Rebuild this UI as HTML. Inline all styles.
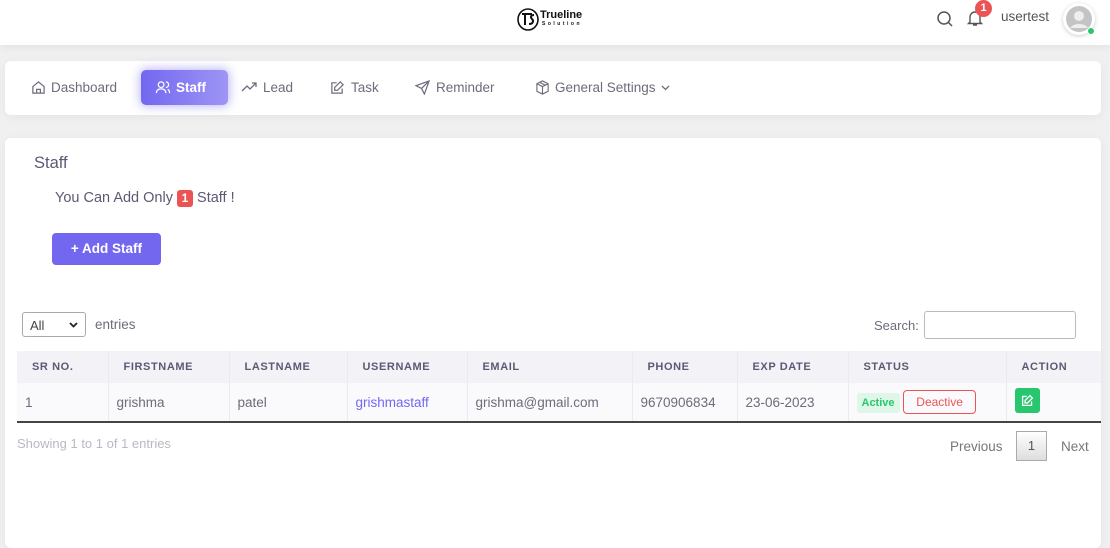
<!DOCTYPE html>
<html><head><style>
*{box-sizing:border-box;margin:0;padding:0}
body{width:1110px;height:534px;overflow:hidden;background:#f0f0f0;font-family:"Liberation Sans",sans-serif;color:#5e5873;position:relative}
.a{position:absolute}
.hdr{left:0;top:0;width:1110px;height:45px;background:#fff;box-shadow:0 2px 8px rgba(0,0,0,.06)}
.card{background:#fff;border-radius:6px;box-shadow:0 2px 10px rgba(0,0,0,.05)}
.nav span{position:absolute;top:80px;font-size:13.5px;color:#6e6b7b}
.nav svg{position:absolute;top:80px}
th,td{text-align:left;padding-left:8px;border-right:1px solid #ebe9f1}
th{font-size:11px;font-weight:bold;letter-spacing:.6px;color:#5e5873;background:#f3f2f7;height:32px;padding-left:15px}
td{font-size:13.5px;color:#6e6b7b;background:#fafafc;height:39px;border-bottom:2px solid #444}
td:last-child,th:last-child{border-right:none}
</style></head><body>
<div class="a hdr"></div>
<svg class="a" style="left:517px;top:8px" width="22" height="23" viewBox="0 0 22 23"><ellipse cx="11" cy="11.5" rx="10" ry="10.5" fill="none" stroke="#111" stroke-width="1.6"/><path d="M5 6h10M8 6v11M17 7c-3 0-4 2-2 4s1 5-3 5" fill="none" stroke="#111" stroke-width="2"/></svg>
<div class="a" style="left:540px;top:9px;font-size:11px;font-weight:bold;color:#111">Trueline</div>
<div class="a" style="left:542px;top:21px;font-size:5px;font-weight:bold;letter-spacing:2.5px;color:#111">Solution</div>
<svg class="a" style="left:936px;top:10px" width="18" height="18" viewBox="0 0 18 18"><circle cx="8" cy="8" r="6" fill="none" stroke="#555" stroke-width="1.5"/><path d="M12.5 12.5L16 16" stroke="#555" stroke-width="1.5"/></svg>
<svg class="a" style="left:965px;top:8px" width="20" height="20" viewBox="0 0 20 20"><path d="M5 14V9a5 5 0 0110 0v5l1.5 1.5h-13z M8 17h4" fill="none" stroke="#555" stroke-width="1.4"/></svg>
<div class="a" style="left:975px;top:0;width:17px;height:17px;border-radius:50%;background:#ea5455;color:#fff;font-size:11px;font-weight:bold;text-align:center;line-height:17px">1</div>
<div class="a" style="left:1001px;top:9px;font-size:13.5px;color:#555">usertest</div>
<div class="a" style="left:1063px;top:3px;width:32px;height:32px;border-radius:50%;background:#fff;box-shadow:0 1px 4px rgba(0,0,0,.2)"></div>
<svg class="a" style="left:1066px;top:6px" width="26" height="26" viewBox="0 0 26 26"><circle cx="13" cy="13" r="13" fill="#c4c4c4"/><circle cx="13" cy="10" r="5" fill="#eee"/><path d="M4 22a10 7 0 0118 0" fill="#eee"/></svg>
<div class="a" style="left:1087px;top:27px;width:8px;height:8px;border-radius:50%;background:#28c76f;border:1px solid #fff"></div>

<div class="a card" style="left:5px;top:61px;width:1096px;height:54px"></div>
<div class="nav">
<svg style="left:31px" width="15" height="15" viewBox="0 0 16 16"><path d="M2 7l6-5 6 5v7H2z M6 14v-4h4v4" fill="none" stroke="#6e6b7b" stroke-width="1.3"/></svg><span style="left:51px">Dashboard</span>
<div class="a" style="left:141px;top:70px;width:87px;height:35px;border-radius:5px;background:linear-gradient(90deg,#7367f0,#9e95f5);box-shadow:0 0 10px 1px rgba(115,103,240,.5)"></div>
<svg style="left:155px" width="16" height="15" viewBox="0 0 16 16"><circle cx="6" cy="5" r="3" fill="none" stroke="#fff" stroke-width="1.3"/><path d="M1 14c0-3 2-4.5 5-4.5s5 1.5 5 4.5M11 2a3 3 0 010 6M13 10c1.5.6 2 2 2 4" fill="none" stroke="#fff" stroke-width="1.3"/></svg><span style="left:176px;color:#fff;font-weight:bold">Staff</span>
<svg style="left:241px" width="17" height="15" viewBox="0 0 17 15"><path d="M1 11l5-5 3 3 6-6M11 3h4v4" fill="none" stroke="#6e6b7b" stroke-width="1.3"/></svg><span style="left:263px">Lead</span>
<svg style="left:330px" width="15" height="15" viewBox="0 0 16 16"><path d="M13 9v5H2V3h5M11 2l3 3-6 6H5V8z" fill="none" stroke="#6e6b7b" stroke-width="1.3"/></svg><span style="left:351px">Task</span>
<svg style="left:415px" width="15" height="15" viewBox="0 0 16 16"><path d="M15 1L1 6l6 3 3 6z M15 1L7 9" fill="none" stroke="#6e6b7b" stroke-width="1.3"/></svg><span style="left:436px">Reminder</span>
<svg style="left:535px" width="15" height="15" viewBox="0 0 16 16"><path d="M8 1l6 3v8l-6 3-6-3V4z M2 4l6 3 6-3M8 7v8M5 2.5l6 3" fill="none" stroke="#6e6b7b" stroke-width="1.2"/></svg><span style="left:555px">General Settings</span>
<svg style="left:661px;top:85px" width="9" height="6" viewBox="0 0 9 6"><path d="M1 1l3.5 3.5L8 1" fill="none" stroke="#6e6b7b" stroke-width="1.3"/></svg>
</div>

<div class="a card" style="left:5px;top:138px;width:1096px;height:410px"></div>
<div class="a" style="left:34px;top:154px;font-size:16.5px;color:#5e5873">Staff</div>
<div class="a" style="left:55px;top:190px;font-size:14.5px;color:#5e5873">You Can Add Only <span style="display:inline-block;background:#ea5455;color:#fff;font-weight:bold;font-size:12px;border-radius:3px;width:16px;height:17px;text-align:center;line-height:17px">1</span> Staff !</div>
<div class="a" style="left:52px;top:233px;width:109px;height:32px;border-radius:4px;background:#7367f0;color:#fff;font-size:13.5px;font-weight:bold;text-align:center;line-height:32px">+ Add Staff</div>

<div class="a" style="left:22px;top:312px;width:64px;height:25px;border:1px solid #aaa;border-radius:3px;font-size:13px;color:#444;padding:5px 7px">All<svg style="position:absolute;right:7px;top:9px" width="9" height="6" viewBox="0 0 9 6"><path d="M1 1l3.5 3.5L8 1" fill="none" stroke="#222" stroke-width="1.8"/></svg></div>
<div class="a" style="left:95px;top:317px;font-size:13.5px;color:#6e6b7b">entries</div>
<div class="a" style="left:874px;top:318px;font-size:13px;color:#6e6b7b">Search:</div>
<div class="a" style="left:924px;top:311px;width:152px;height:28px;border:1px solid #bbb;border-radius:3px"></div>

<table class="a" style="left:17px;top:351px;width:1084px;border-collapse:collapse">
<tr><th style="width:91px">SR NO.</th><th style="width:121px">FIRSTNAME</th><th style="width:118px">LASTNAME</th><th style="width:120px">USERNAME</th><th style="width:165px">EMAIL</th><th style="width:105px">PHONE</th><th style="width:111px">EXP DATE</th><th style="width:158px">STATUS</th><th>ACTION</th></tr>
<tr><td>1</td><td>grishma</td><td>patel</td><td style="color:#7367f0">grishmastaff</td><td>grishma@gmail.com</td><td>9670906834</td><td>23-06-2023</td>
<td><span style="display:inline-block;background:#dff7e9;color:#28c76f;font-size:11px;font-weight:bold;padding:4px 5px;border-radius:3px">Active</span> <span style="display:inline-block;border:1px solid #ea5455;color:#ea5455;font-size:12px;padding:4px 12px;border-radius:4px">Deactive</span></td>
<td><span style="display:inline-block;width:25px;height:25px;background:#28c76f;border-radius:3px;position:relative"><svg style="position:absolute;left:6px;top:6px" width="13" height="13" viewBox="0 0 16 16"><path d="M13 9v5H2V3h5M11 2l3 3-6 6H5V8z" fill="none" stroke="#fff" stroke-width="1.6"/></svg></span></td></tr>
</table>

<div class="a" style="left:17px;top:436px;font-size:13px;color:#b9b9c3">Showing 1 to 1 of 1 entries</div>
<div class="a" style="left:950px;top:439px;font-size:13.5px;color:#777">Previous</div>
<div class="a" style="left:1016px;top:431px;width:31px;height:30px;border:1px solid #aaa;background:linear-gradient(#fff,#ddd);font-size:13px;color:#555;text-align:center;line-height:28px">1</div>
<div class="a" style="left:1061px;top:439px;font-size:13.5px;color:#777">Next</div>
</body></html>
